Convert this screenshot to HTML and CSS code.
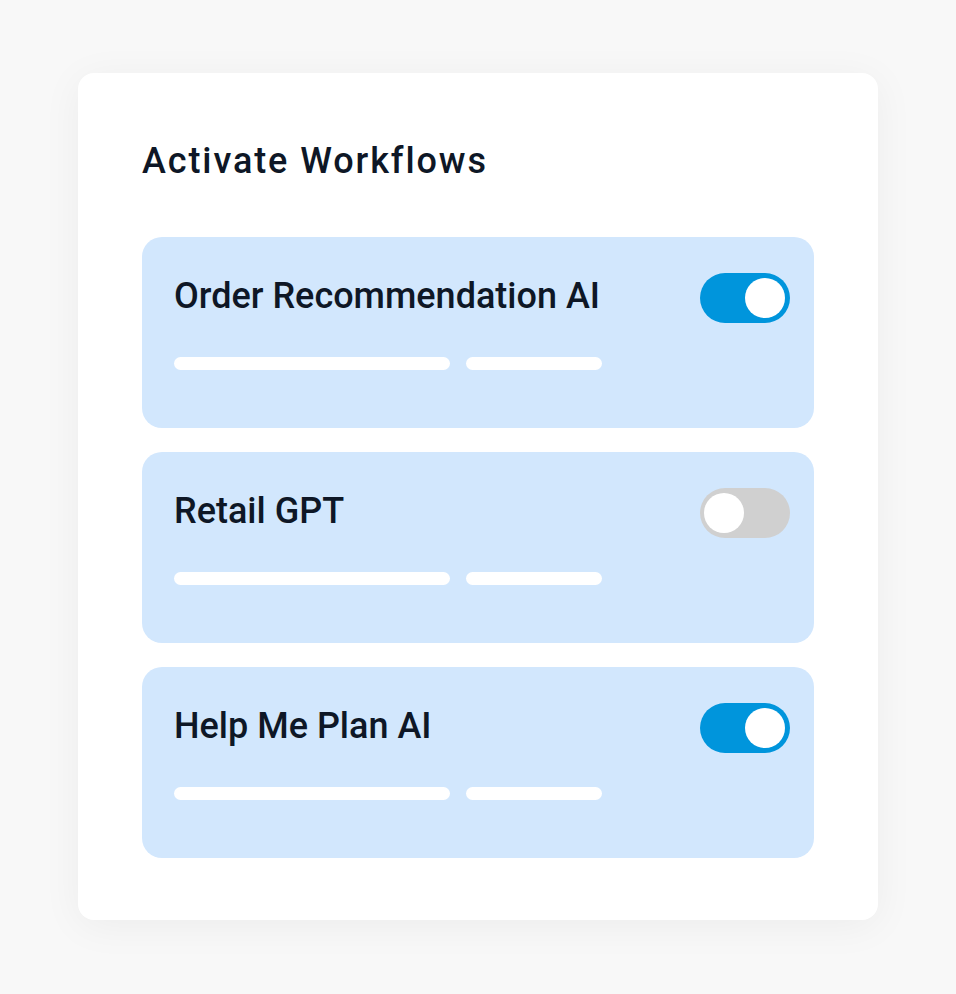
FILE: index.html
```html
<!DOCTYPE html>
<html>
<head>
<meta charset="utf-8">
<link rel="stylesheet" href="styles.css">
</head>
<body>
<div class="card">
  <h1 class="title">Activate Workflows</h1>
  <div class="list">
    <div class="item">
      <div class="row">
        <span class="name">Order Recommendation AI</span>
        <span class="toggle on"><span class="knob"></span></span>
      </div>
      <div class="bars"><span class="bar long"></span><span class="bar short"></span></div>
    </div>
    <div class="item">
      <div class="row">
        <span class="name">Retail GPT</span>
        <span class="toggle off"><span class="knob"></span></span>
      </div>
      <div class="bars"><span class="bar long"></span><span class="bar short"></span></div>
    </div>
    <div class="item">
      <div class="row">
        <span class="name">Help Me Plan AI</span>
        <span class="toggle on"><span class="knob"></span></span>
      </div>
      <div class="bars"><span class="bar long"></span><span class="bar short"></span></div>
    </div>
  </div>
</div>
</body>
</html>
```
FILE: styles.css
```css
html, body { margin: 0; padding: 0; }
body {
  background: #f8f8f8;
  font-family: Roboto, "Liberation Sans", sans-serif;
  color: #0e1726;
  width: 956px;
  height: 994px;
  overflow: hidden;
}
.card {
  margin: 73px 0 0 78px;
  width: 800px;
  height: 847px;
  box-sizing: border-box;
  background: #fff;
  border-radius: 16px;
  box-shadow: 0 6px 40px rgba(0,0,0,0.05);
  padding: 64px 64px 0 64px;
}
.title {
  margin: 0;
  font-size: 36px;
  font-weight: 500;
  letter-spacing: 1.9px;
  line-height: 48px;
}
.list {
  display: flex;
  flex-direction: column;
  gap: 24px;
  margin-top: 52px;
}
.item {
  background: #d2e7fd;
  border-radius: 20px;
  height: 191px;
  box-sizing: border-box;
  padding: 36px 24px 0 32px;
}
.row {
  display: flex;
  justify-content: space-between;
  align-items: flex-start;
  height: 50px;
}
.name {
  font-size: 36px;
  font-weight: 500;
  line-height: 40px;
  margin-top: 3px;
}
.toggle {
  width: 90px;
  height: 50px;
  border-radius: 25px;
  box-sizing: border-box;
  padding: 5px;
  display: flex;
}
.toggle.on { background: #0095dc; justify-content: flex-end; }
.toggle.off { background: #d0d0d0; justify-content: flex-start; padding-left: 4px; }
.knob {
  width: 40px;
  height: 40px;
  border-radius: 50%;
  background: #fff;
}
.bars {
  display: flex;
  gap: 16px;
  margin-top: 34px;
}
.bar {
  height: 13px;
  border-radius: 7px;
  background: #fff;
}
.bar.long { width: 276px; }
.bar.short { width: 136px; }
```
